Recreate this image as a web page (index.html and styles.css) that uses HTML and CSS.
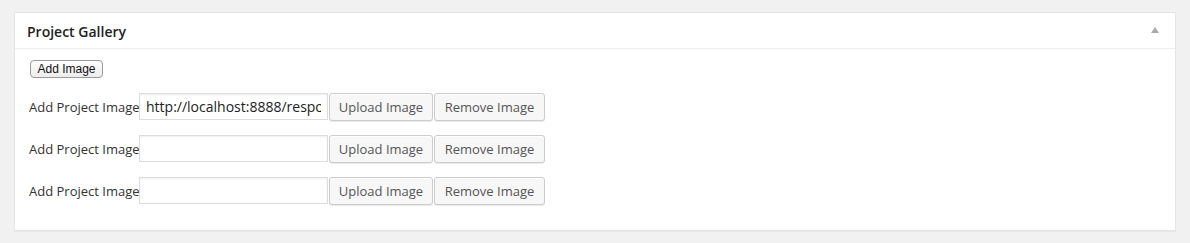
FILE: index.html
```html
<!DOCTYPE html>
<html lang="en">

<head>
  <meta charset="UTF-8">
  <title>Project Gallery</title>
  <link rel="stylesheet" href="styles.css">
</head>

<body>
  <div class="postbox">
    <div class="postbox-header">
      <h2 class="hndle">Project Gallery</h2>
      <span class="toggle-arrow"></span>
    </div>
    <div class="inside">
      <button type="button" class="add-btn">Add Image</button>
      <div class="image-rows">
        <div class="image-row">
          <label>Add Project Image</label>
          <input type="text" class="url-field" value="http://localhost:8888/responsive/wp-content/uploads/project.jpg">
          <button type="button" class="button upload">Upload Image</button>
          <button type="button" class="button remove">Remove Image</button>
        </div>
        <div class="image-row">
          <label>Add Project Image</label>
          <input type="text" class="url-field" value="">
          <button type="button" class="button upload">Upload Image</button>
          <button type="button" class="button remove">Remove Image</button>
        </div>
        <div class="image-row">
          <label>Add Project Image</label>
          <input type="text" class="url-field" value="">
          <button type="button" class="button upload">Upload Image</button>
          <button type="button" class="button remove">Remove Image</button>
        </div>
      </div>
    </div>
  </div>
</body>

</html>
```

FILE: styles.css
```css
body {
  margin: 0;
  padding: 12px 14px;
  background: #f1f1f1;
  font-family: "Open Sans", "Liberation Sans", sans-serif;
  color: #444;
}

.postbox {
  background: #fff;
  border: 1px solid #e5e5e5;
  box-shadow: 0 1px 1px rgba(0, 0, 0, 0.04);
  height: 217px;
}

.postbox-header {
  display: flex;
  align-items: center;
  justify-content: space-between;
  height: 35px;
  border-bottom: 1px solid #eee;
  padding: 0 16px 0 12px;
}

.hndle {
  margin: 0;
  font-size: 14px;
  font-weight: 600;
  color: #222;
  line-height: 1;
  position: relative;
  top: 1px;
}

.toggle-arrow {
  width: 0;
  height: 0;
  border-left: 4px solid transparent;
  border-right: 4px solid transparent;
  border-bottom: 6px solid #aaa;
  margin-top: -1px;
}

.inside {
  padding: 11px 12px 0 12px;
}

.add-btn {
  margin: 0 0 0 3px;
  height: 18px;
  width: 73px;
  padding: 0;
  font-family: "Liberation Sans", Arial, sans-serif;
  font-size: 12px;
  color: #111;
  background: linear-gradient(#ffffff, #ececec);
  border: 1px solid #9a9a9a;
  border-radius: 4px;
  display: block;
}

.image-rows {
  display: flex;
  flex-direction: column;
  gap: 14px;
  margin-top: 15px;
}

.image-row {
  display: flex;
  align-items: center;
  height: 28px;
}

.image-row label {
  font-size: 13px;
  color: #333;
  width: 110px;
  padding-left: 2px;
  white-space: nowrap;
}

.url-field {
  box-sizing: border-box;
  width: 189px;
  height: 27px;
  margin: 0 1px 0 0;
  padding: 0 6px;
  border: 1px solid #ddd;
  box-shadow: inset 0 1px 2px rgba(0, 0, 0, 0.07);
  font-family: "Open Sans", sans-serif;
  font-size: 14px;
  color: #222;
  align-self: flex-start;
}

.button {
  box-sizing: border-box;
  height: 28px;
  margin: 0 1px 0 0;
  padding: 0;
  font-family: "Open Sans", sans-serif;
  font-size: 13px;
  color: #555;
  background: #f7f7f7;
  border: 1px solid #ccc;
  border-radius: 3px;
  box-shadow: inset 0 1px 0 #fff, 0 1px 0 rgba(0, 0, 0, 0.08);
  white-space: nowrap;
}

.upload {
  width: 104px;
}

.remove {
  width: 111px;
}
```
